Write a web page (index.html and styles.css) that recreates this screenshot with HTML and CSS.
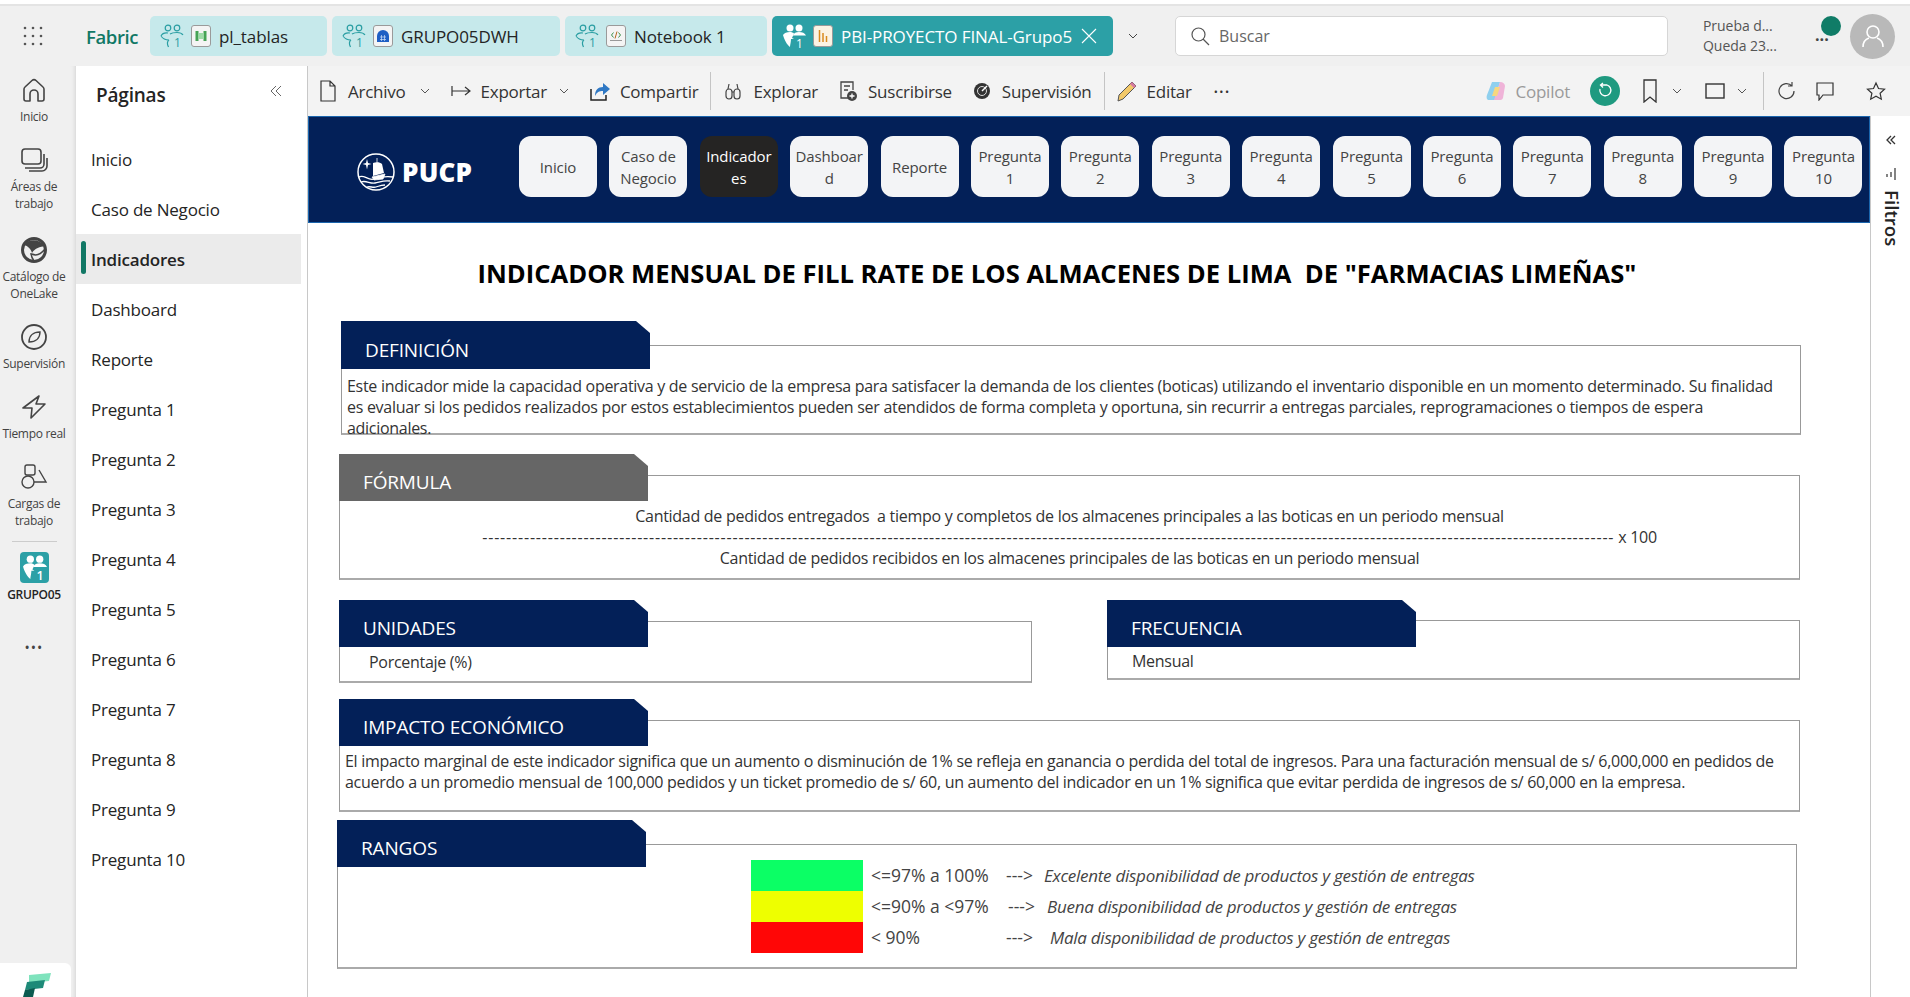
FILE: index.html
```html
<!DOCTYPE html>
<html lang="es">
<head>
	<meta charset="utf-8">
	<title>PBI-PROYECTO FINAL-Grupo5</title>
	<link rel="stylesheet" href="styles.css">
</head>

<body>
	<svg class="defs" width="0" height="0">
		<defs>
			<symbol id="group" viewBox="0 0 24 24">
				<g fill="none" stroke="currentColor" stroke-width="1.2">
					<circle cx="8" cy="4" r="2.8"/>
					<circle cx="17" cy="4" r="2.8"/>
					<path d="M10 10c1.500-1 3.500-1.500 7-1.500 3 0 5 1 6 2.500"/>
					<path d="M1 12c1-2 4-3.500 7-3M1 12c2 3 5 4 8 4M9 16c-2 1.500-2 4-.5 7"/>
				</g>
				<text x="14" y="23" font-size="12" fill="currentColor" font-family="Open Sans">1</text>
			</symbol>
			<symbol id="group-solid" viewBox="0 0 24 24">
				<circle cx="8" cy="4" r="3.500" fill="currentColor"/>
				<circle cx="17" cy="4" r="3.500" fill="currentColor"/>
				<path d="M11 11c1-2 3-3 6-3 3 0 6 1 7 3.500H11z" fill="currentColor"/>
				<path d="M1 11c1-2 4-3 7-3 1.500 0 3 .5 4 1.500L10 14l2 1H9c0 3-1 6-1 8-3-2-6-8-7-12z" fill="currentColor"/>
				<text x="14" y="24" font-size="12" fill="currentColor" font-family="Open Sans">1</text>
			</symbol>
			<symbol id="chev" viewBox="0 0 12 12">
				<path d="M2 4l4 4 4-4" fill="none" stroke="currentColor" stroke-width="1"/>
			</symbol>
		</defs>
	</svg>

	<!-- barra superior -->
	<header class="topbar">
		<svg class="waffle" width="22" height="22" viewBox="0 0 22 22" fill="#555">
			<circle cx="3" cy="3" r="1.300"/><circle cx="11" cy="3" r="1.300"/><circle cx="19" cy="3" r="1.300"/>
			<circle cx="3" cy="11" r="1.300"/><circle cx="11" cy="11" r="1.300"/><circle cx="19" cy="11" r="1.300"/>
			<circle cx="3" cy="19" r="1.300"/><circle cx="11" cy="19" r="1.300"/><circle cx="19" cy="19" r="1.300"/>
		</svg>
		<span class="brand">Fabric</span>
		<div class="tabs">
			<div class="tab tab-pl">
				<svg class="tab-group" width="24" height="24"><use href="#group"/></svg>
				<span class="item-icon"><svg width="14" height="14" viewBox="0 0 14 14"><rect x="1.500" y="2" width="3" height="10" fill="#46a356"/><rect x="9.500" y="2" width="3" height="10" fill="#46a356"/><rect x="4.500" y="4" width="5" height="6" fill="#9edba8"/></svg></span>
				pl_tablas
			</div>
			<div class="tab tab-dwh">
				<svg class="tab-group" width="24" height="24"><use href="#group"/></svg>
				<span class="item-icon"><svg width="14" height="14" viewBox="0 0 14 14"><path d="M1 13V7a6 6 0 0 1 12 0v6z" fill="#1f5fc4"/><path d="M4 8h6M4 10.500h6M5.500 6v6M8.500 6v6" stroke="#cfe0f8" stroke-width=".7"/></svg></span>
				GRUPO05DWH
			</div>
			<div class="tab tab-nb">
				<svg class="tab-group" width="24" height="24"><use href="#group"/></svg>
				<span class="item-icon"><svg width="14" height="14" viewBox="0 0 14 14"><path d="M4.500 3.500L2.500 6l2 2.500M9.500 3.500l2 2.500-2 2.500" fill="none" stroke="#3a8f4a" stroke-width="1"/><path d="M8 2.500L6 9.500" stroke="#b5651d" stroke-width="1"/><path d="M1 11.500h12" stroke="#999" stroke-width="1"/></svg></span>
				Notebook 1
			</div>
			<div class="tab tab-active">
				<svg class="tab-group" width="24" height="24"><use href="#group-solid"/></svg>
				<span class="item-icon icon-report"><svg width="14" height="14" viewBox="0 0 14 14"><path d="M3.500 1v12M7 4v9M10.500 7v6" stroke="#d98a1f" stroke-width="1.500"/></svg></span>
				PBI-PROYECTO FINAL-Grupo5
				<svg class="tab-close" width="16" height="16" viewBox="0 0 16 16"><path d="M1 1l14 14M15 1L1 15" stroke="#fff" stroke-width="1.100"/></svg>
			</div>
		</div>
		<svg class="tabs-more" width="12" height="12"><use href="#chev"/></svg>
		<div class="search">
			<svg width="20" height="20" viewBox="0 0 20 20"><circle cx="8.500" cy="8.500" r="6.500" fill="none" stroke="#555" stroke-width="1.200"/><path d="M13 13l6 6" stroke="#555" stroke-width="1.200"/></svg>
			Buscar
		</div>
		<div class="trial">
			<div>Prueba d...</div>
			<div>Queda 23...</div>
		</div>
		<div class="more-wrap">
			<span class="more-dots">...</span>
			<span class="status-dot"></span>
		</div>
		<div class="avatar">
			<svg width="24" height="24" viewBox="0 0 24 24" fill="none" stroke="#fff" stroke-width="1.600"><circle cx="12" cy="8" r="6"/><path d="M2 23c0-5 3-8 6-9M22 23c0-5-3-8-6-9"/></svg>
		</div>
	</header>

	<div class="layout">
		<!-- rail izquierdo -->
		<nav class="rail">
			<div class="rail-item">
				<svg width="28" height="28" viewBox="0 0 28 28" fill="none" stroke="#444" stroke-width="1.600"><path d="M12 4.500a3 3 0 0 1 4 0l7 6.500a3 3 0 0 1 1 2.500V23a2 2 0 0 1-2 2h-4v-7a4 4 0 0 0-8 0v7H6a2 2 0 0 1-2-2v-9.500A3 3 0 0 1 5 11z" stroke-linejoin="round"/></svg>
				<span>Inicio</span>
			</div>
			<div class="rail-item">
				<svg width="28" height="28" viewBox="0 0 28 28" fill="none" stroke="#444" stroke-width="1.600"><rect x="2" y="3" width="19" height="15" rx="3"/><path d="M24 8v10a4 4 0 0 1-4 4H5M27 12v8a5 5 0 0 1-5 5H9"/></svg>
				<span>Áreas de<br>trabajo</span>
			</div>
			<div class="rail-item rail-cat">
				<svg width="28" height="28" viewBox="0 0 28 28"><circle cx="14" cy="14" r="11.500" fill="#eee" stroke="#444" stroke-width="3"/><path d="M4 9C8 3 19 2 25 10 20 11 15 12 12 17 11 13 8 10 4 9z" fill="#444"/><path d="M11 17c0 3 1 5 3 8M12 18c4 2 9 0 13-5" fill="none" stroke="#444" stroke-width="1.500"/></svg>
				<span>Catálogo de<br>OneLake</span>
			</div>
			<div class="rail-item">
				<svg width="28" height="28" viewBox="0 0 28 28" fill="none" stroke="#444" stroke-width="1.800"><circle cx="14" cy="14" r="12"/><path d="M9 19c0-6 4-10 11-10 0 6-4 10-11 10z" stroke-width="1.400"/></svg>
				<span>Supervisión</span>
			</div>
			<div class="rail-item">
				<svg width="28" height="28" viewBox="0 0 28 28" fill="none" stroke="#444" stroke-width="1.600"><path d="M19 3L3 15h9l-1 10 14-14h-9z" stroke-linejoin="round"/></svg>
				<span>Tiempo real</span>
			</div>
			<div class="rail-item">
				<svg width="28" height="28" viewBox="0 0 28 28" fill="none" stroke="#444" stroke-width="1.400"><rect x="5" y="2" width="10" height="10" rx="2"/><circle cx="8" cy="19" r="6"/><path d="M19 7l7 12H14"/></svg>
				<span>Cargas de<br>trabajo</span>
			</div>
			<div class="rail-sep"></div>
			<div class="rail-item rail-group">
				<span class="group-tile"><svg width="25" height="25"><use href="#group-solid"/></svg></span>
				<span>GRUPO05</span>
			</div>
			<div class="rail-dots">•••</div>
			<div class="rail-logo">
				<svg width="30" height="24" viewBox="0 0 30 24"><path d="M8 2l22-2-2 8-20 2z" fill="#7fe3bd"/><path d="M6 9l18-2-2 8-18 2z" fill="#1d8a78"/><path d="M4 17l10-2-2 9H2z" fill="#0c5a50"/></svg>
			</div>
		</nav>

		<!-- panel de paginas -->
		<aside class="pages">
			<div class="pages-head">
				<h2>Páginas</h2>
				<svg width="14" height="14" viewBox="0 0 14 14" fill="none" stroke="#666" stroke-width="1"><path d="M7 2L2 7l5 5M12 2L7 7l5 5"/></svg>
			</div>
			<ul class="page-list">
				<li>Inicio</li>
				<li>Caso de Negocio</li>
				<li class="page-on">Indicadores</li>
				<li>Dashboard</li>
				<li>Reporte</li>
				<li>Pregunta 1</li>
				<li>Pregunta 2</li>
				<li>Pregunta 3</li>
				<li>Pregunta 4</li>
				<li>Pregunta 5</li>
				<li>Pregunta 6</li>
				<li>Pregunta 7</li>
				<li>Pregunta 8</li>
				<li>Pregunta 9</li>
				<li>Pregunta 10</li>
			</ul>
		</aside>

		<main class="main">
			<!-- barra de comandos -->
			<div class="cmdbar">
				<svg class="ic" width="20" height="22" viewBox="0 0 20 22" fill="none" stroke="#333" stroke-width="1.200"><path d="M3 1h9l5 5v15H3zM12 1v5h5"/></svg>
				<span class="cmd-txt">Archivo</span>
				<svg class="cmd-chev chev-first" width="12" height="12"><use href="#chev"/></svg>
				<svg class="ic m20" width="20" height="14" viewBox="0 0 20 14" fill="none" stroke="#333" stroke-width="1.200"><path d="M1 2v10M1 7h18M14 3l5 4-5 4"/></svg>
				<span class="cmd-txt">Exportar</span>
				<svg class="cmd-chev" width="12" height="12"><use href="#chev"/></svg>
				<svg class="ic m20" width="20" height="20" viewBox="0 0 20 20"><path d="M1 8v11h15v-5" fill="none" stroke="#222" stroke-width="1.500"/><path d="M5 15c0-6 3-9 8-9V2l7 6-7 6v-4c-4 0-6 1-8 5z" fill="#2f78c4"/></svg>
				<span class="cmd-txt">Compartir</span>
				<span class="cmd-sep"></span>
				<svg class="ic" width="20" height="18" viewBox="0 0 20 18" fill="none" stroke="#444" stroke-width="1.200"><rect x="3" y="7" width="6" height="10" rx="3"/><rect x="11" y="7" width="6" height="10" rx="3"/><path d="M5 7l1-5M15 7l-1-5M9 10h2"/></svg>
				<span class="cmd-txt">Explorar</span>
				<svg class="ic m20" width="20" height="22" viewBox="0 0 20 22" fill="none" stroke="#444" stroke-width="1.300"><path d="M10 18H3V2h12v8M6 6h6M6 10h4"/><circle cx="14" cy="16" r="5" fill="#444" stroke="none"/><path d="M14 13.500v5M11.500 16h5" stroke="#fff"/></svg>
				<span class="cmd-txt">Suscribirse</span>
				<svg class="ic m20" width="20" height="20" viewBox="0 0 20 20"><circle cx="10" cy="10" r="8" fill="#333"/><circle cx="10" cy="10" r="4.500" fill="none" stroke="#ddd" stroke-width="1"/><path d="M10 10l5-5" stroke="#fff" stroke-width="1.500"/></svg>
				<span class="cmd-txt">Supervisión</span>
				<span class="cmd-sep"></span>
				<svg class="ic" width="20" height="22" viewBox="0 0 20 22"><path d="M15 2l4 4L6 19l-5 2 1-6z" fill="#f3c969" stroke="#555" stroke-width="1"/><path d="M15 2l4 4-2 2-4-4z" fill="#d77ba0"/></svg>
				<span class="cmd-txt">Editar</span>
				<span class="cmd-more">•••</span>

				<div class="cmd-right">
					<svg class="ic" width="20" height="22" viewBox="0 0 20 22"><path d="M6 2h8l-5 18H3C1 20 0 18 1 15z" fill="#8fd0ee"/><path d="M14 2c3 0 5 2 5 4l-2 12c-1 2-2 2-4 2H8z" fill="#efb3d8"/><path d="M9 7h5l-3 9H6z" fill="#f7d77f"/></svg>
					<span class="cmd-txt copilot">Copilot</span>
					<span class="reset">
						<svg width="18" height="18" viewBox="0 0 18 18" fill="none" stroke="#fff" stroke-width="1.300"><path d="M5 3h6a5.500 5.500 0 1 1-7 4M7 1L4.500 3 7 5.500"/></svg>
					</span>
					<svg class="ic m20" width="20" height="24" viewBox="0 0 20 24" fill="none" stroke="#333" stroke-width="1.300"><path d="M4 1h12v22l-6-5-6 5z"/></svg>
					<svg class="cmd-chev" width="12" height="12"><use href="#chev"/></svg>
					<svg class="ic m22" width="20" height="16" viewBox="0 0 20 16" fill="none" stroke="#333" stroke-width="1.400"><rect x="1" y="1" width="18" height="14"/></svg>
					<svg class="cmd-chev" width="12" height="12"><use href="#chev"/></svg>
					<span class="cmd-sep sep-right"></span>
					<svg class="ic" width="20" height="20" viewBox="0 0 20 20" fill="none" stroke="#444" stroke-width="1.200"><path d="M16 5a7.500 7.500 0 1 0 2 5M16 1v4h-4"/></svg>
					<svg class="ic m19" width="20" height="20" viewBox="0 0 20 20" fill="none" stroke="#333" stroke-width="1.200"><path d="M2 2h16v12H8l-4 5v-5H2z"/></svg>
					<svg class="ic m31" width="20" height="20" viewBox="0 0 20 20" fill="none" stroke="#333" stroke-width="1.200"><path d="M10 2l2.500 5.500 6 .7-4.400 4 1.200 6L10 15.200 4.700 18.200l1.200-6-4.400-4 6-.7z"/></svg>
				</div>
			</div>

			<div class="report-wrap">
				<div class="report">
					<!-- banner -->
					<div class="banner">
						<div class="pucp">
							<svg width="38" height="38" viewBox="0 0 38 38">
								<circle cx="19" cy="19" r="18" fill="none" stroke="#fff" stroke-width="1.500"/>
								<path d="M16 10c3-1 7-1 9 1l2 9-11 3z" fill="#fff"/>
								<path d="M20 5v5M15 24l13-3-2 5-9 1z" fill="#fff" stroke="#fff" stroke-width=".8"/>
								<path d="M2 24c5-3 9 4 15 2s11-3 19-2M4 29c5-2 9 2 14 1s9-3 15-2M10 34c3-1 6 1 9 0s5-2 9-2" fill="none" stroke="#fff" stroke-width="1.300"/>
								<path d="M10 6l1 4 3.500 1-3.500 1-1 4.500-1-4.500L5.500 11 9 10z" fill="#fff"/>
							</svg>
							<span>PUCP</span>
						</div>
						<div class="nav-btns">
							<div class="nav-btn">Inicio</div>
							<div class="nav-btn">Caso de<br>Negocio</div>
							<div class="nav-btn nav-on">Indicador<br>es</div>
							<div class="nav-btn">Dashboar<br>d</div>
							<div class="nav-btn">Reporte</div>
							<div class="nav-btn">Pregunta<br>1</div>
							<div class="nav-btn">Pregunta<br>2</div>
							<div class="nav-btn">Pregunta<br>3</div>
							<div class="nav-btn">Pregunta<br>4</div>
							<div class="nav-btn">Pregunta<br>5</div>
							<div class="nav-btn">Pregunta<br>6</div>
							<div class="nav-btn">Pregunta<br>7</div>
							<div class="nav-btn">Pregunta<br>8</div>
							<div class="nav-btn">Pregunta<br>9</div>
							<div class="nav-btn">Pregunta<br>10</div>
						</div>
					</div>

					<h1 class="title">INDICADOR MENSUAL DE FILL RATE DE LOS ALMACENES DE LIMA  DE "FARMACIAS LIMEÑAS"</h1>

					<section class="sec sec-def">
						<div class="sec-tab">DEFINICIÓN</div>
						<div class="sec-box box-def">
							<p>Este indicador mide la capacidad operativa y de servicio de la empresa para satisfacer la demanda de los clientes (boticas) utilizando el inventario disponible en un momento determinado. Su finalidad es evaluar si los pedidos realizados por estos establecimientos pueden ser atendidos de forma completa y oportuna, sin recurrir a entregas parciales, reprogramaciones o tiempos de espera adicionales.</p>
						</div>
					</section>

					<section class="sec sec-form">
						<div class="sec-tab tab-gray">FÓRMULA</div>
						<div class="sec-box box-form">
							<p>Cantidad de pedidos entregados  a tiempo y completos de los almacenes principales a las boticas en un periodo mensual</p>
							<p><span class="dashes">----------------------------------------------------------------------------------------------------------------------------------------------------------------------------------------------</span> x 100</p>
							<p>Cantidad de pedidos recibidos en los almacenes principales de las boticas en un periodo mensual</p>
						</div>
					</section>

					<div class="sec-pair">
						<section class="sec sec-uni">
							<div class="sec-tab">UNIDADES</div>
							<div class="sec-box box-uni"><p>Porcentaje (%)</p></div>
						</section>
						<section class="sec sec-frec">
							<div class="sec-tab">FRECUENCIA</div>
							<div class="sec-box box-frec"><p>Mensual</p></div>
						</section>
					</div>

					<section class="sec sec-imp">
						<div class="sec-tab">IMPACTO ECONÓMICO</div>
						<div class="sec-box box-imp">
							<p>El impacto marginal de este indicador significa que un aumento o disminución de 1% se refleja en ganancia o perdida del total de ingresos. Para una facturación mensual de s/ 6,000,000 en pedidos de acuerdo a un promedio mensual de 100,000 pedidos y un ticket promedio de s/ 60, un aumento del indicador en un 1% significa que evitar perdida de ingresos de s/ 60,000 en la empresa.</p>
						</div>
					</section>

					<section class="sec sec-ran">
						<div class="sec-tab">RANGOS</div>
						<div class="sec-box box-ran">
							<div class="range">
								<span class="swatch sw-green"></span>
								<span class="r-label">&lt;=97% a 100%</span>
								<span class="r-arrow">---&gt;</span>
								<em class="r-desc">Excelente disponibilidad de productos y gestión de entregas</em>
							</div>
							<div class="range">
								<span class="swatch sw-yellow"></span>
								<span class="r-label">&lt;=90% a &lt;97%</span>
								<span class="r-arrow r2">---&gt;</span>
								<em class="r-desc">Buena disponibilidad de productos y gestión de entregas</em>
							</div>
							<div class="range">
								<span class="swatch sw-red"></span>
								<span class="r-label">&lt; 90%</span>
								<span class="r-arrow r3">---&gt;</span>
								<em class="r-desc">Mala disponibilidad de productos y gestión de entregas</em>
							</div>
						</div>
					</section>
				</div>

				<!-- panel de filtros -->
				<aside class="filters">
					<svg width="10" height="10" viewBox="0 0 10 10" fill="none" stroke="#333" stroke-width="1.300"><path d="M5 1L1 5l4 4M9 1L5 5l4 4"/></svg>
					<svg class="filter-ic" width="10" height="14" viewBox="0 0 10 14" stroke="#333" stroke-width="1.200"><path d="M1 7v3M5 5v5M9 1v12"/></svg>
					<span class="filter-txt">Filtros</span>
				</aside>
			</div>
		</main>
	</div>
</body>

</html>
```

FILE: styles.css
```css
* {
	box-sizing: border-box;
}

html,
body {
	margin: 0;
	height: 997px;
	overflow: hidden;
}

body {
	font-family: "Open Sans", sans-serif;
	color: #242424;
	background-color: #fff;
}

.defs {
	position: absolute;
}

/* barra superior */
.topbar {
	display: flex;
	align-items: center;
	height: 62px;
	margin-top: 4px;
	border-top: 2px solid #e4e4e4;
	background-color: #f0f0f0;
}

.waffle {
	margin-left: 22px;
	flex: none;
}

.brand {
	width: 64px;
	margin-left: 42px;
	font-size: 18.500px;
	font-weight: 600;
	letter-spacing: -0.4px;
	color: #117865;
}

.tabs {
	display: flex;
	gap: 5px;
}

.tab {
	display: flex;
	align-items: center;
	gap: 7px;
	height: 40px;
	padding-left: 10px;
	border-radius: 5px;
	background-color: #c6e9eb;
	font-size: 17px;
	letter-spacing: -0.1px;
	white-space: nowrap;
	color: #242424;
}

.tab-group {
	flex: none;
	color: #2a9ea3;
}

.tab-pl {
	width: 177px;
}

.tab-dwh {
	width: 228px;
}

.tab-nb {
	width: 202px;
}

.tab-active {
	width: 341px;
	background-color: #2ca0a6;
	color: #fff;
}

.tab-active .tab-group {
	color: #fff;
}

.item-icon {
	display: flex;
	align-items: center;
	justify-content: center;
	width: 20px;
	height: 22px;
	margin-right: 1px;
	border: 1px solid #9a9a9a;
	border-radius: 3px;
	background-color: #f4f4f4;
	flex: none;
}

.icon-report {
	background-color: #fbf3e4;
}

.tab-close {
	margin-left: 2px;
}

.tabs-more {
	margin-left: 14px;
	color: #444;
	flex: none;
}

.search {
	display: flex;
	align-items: center;
	gap: 9px;
	width: 493px;
	height: 40px;
	margin-left: 36px;
	padding-left: 14px;
	border: 1px solid #d6d6d6;
	border-radius: 5px;
	background-color: #fff;
	font-size: 16px;
	color: #666;
}

.trial {
	width: 92px;
	margin-left: 35px;
	font-size: 14px;
	line-height: 20px;
	letter-spacing: -0.05px;
	color: #555;
}

.more-wrap {
	position: relative;
	width: 30px;
	margin-left: 20px;
	height: 40px;
}

.more-dots {
	position: absolute;
	left: 0;
	top: 8px;
	font-size: 16px;
	font-weight: 700;
	color: #444;
}

.status-dot {
	position: absolute;
	left: 6px;
	top: 0;
	width: 20px;
	height: 20px;
	border-radius: 50%;
	background-color: #107c67;
}

.avatar {
	display: flex;
	align-items: center;
	justify-content: center;
	width: 45px;
	height: 45px;
	margin-left: 5px;
	border-radius: 50%;
	background-color: #b9b9b9;
}

/* cuerpo */
.layout {
	display: flex;
	height: 931px;
}

/* rail */
.rail {
	position: relative;
	display: flex;
	flex-direction: column;
	align-items: center;
	gap: 21px;
	width: 76px;
	padding: 10px 8px 0 0;
	background-color: #f0f0f0;
	box-shadow: inset -5px 0 5px -5px #c8c8c8;
	flex: none;
}

.rail-item {
	display: flex;
	flex-direction: column;
	align-items: center;
	gap: 4px;
	width: 68px;
	font-size: 12px;
	line-height: 17px;
	letter-spacing: -0.3px;
	text-align: center;
	color: #424242;
}

.rail-item svg {
	display: block;
}

.rail-cat {
	margin-top: 3px;
}

.rail-sep {
	width: 45px;
	height: 1px;
	margin-top: -9px;
	background-color: #ccc;
}

.rail-group {
	gap: 3px;
	margin-top: -11px;
	font-weight: 600;
	color: #242424;
}

.group-tile {
	display: flex;
	align-items: center;
	justify-content: center;
	width: 29px;
	height: 31px;
	border-radius: 4px;
	background-color: #2ca0a6;
	color: #fff;
}

.rail-dots {
	margin-top: 14px;
	font-size: 14px;
	letter-spacing: 1px;
	color: #444;
}

.rail-logo {
	position: absolute;
	left: 0;
	bottom: 0;
	display: flex;
	justify-content: center;
	align-items: flex-end;
	width: 71px;
	height: 34px;
	padding-top: 11px;
	border-radius: 0 6px 0 0;
	background-color: #fff;
	overflow: hidden;
}

/* paginas */
.pages {
	width: 232px;
	border-right: 1px solid #c8c8c8;
	background-color: #fff;
	flex: none;
}

.pages-head {
	display: flex;
	justify-content: space-between;
	height: 69px;
	padding: 16px 24px 0 20px;
}

.pages-head svg {
	margin-top: 2px;
}

.pages-head h2 {
	margin: 0;
	font-size: 19px;
	font-weight: 600;
	letter-spacing: -0.2px;
}

.page-list {
	margin: -1px 0 0;
	padding: 0;
	list-style: none;
}

.page-list li {
	position: relative;
	display: flex;
	align-items: center;
	width: 225px;
	height: 50px;
	padding-left: 15px;
	font-size: 17px;
	letter-spacing: -0.2px;
}

.page-on {
	background-color: #ebebeb;
	font-weight: 600;
}

.page-on::before {
	content: "";
	position: absolute;
	left: 5px;
	top: 7px;
	width: 5px;
	height: 33px;
	border-radius: 3px;
	background-color: #117865;
}

/* comandos */
.main {
	display: flex;
	flex-direction: column;
	flex: 1;
	min-width: 0;
	background-color: #fff;
}

.cmdbar {
	display: flex;
	align-items: center;
	height: 50px;
	padding-left: 10px;
	background-color: #f3f3f3;
	flex: none;
}

.ic {
	flex: none;
}

.m20 {
	margin-left: 20px;
}

.m22 {
	margin-left: 22px;
}

.m19 {
	margin-left: 19px;
}

.m31 {
	margin-left: 31px;
}

.cmd-txt {
	margin-left: 10px;
	font-size: 17px;
	letter-spacing: -0.25px;
	white-space: nowrap;
	color: #333;
}

.cmd-chev {
	margin-left: 11px;
	color: #555;
	flex: none;
}

.chev-first {
	margin-left: 13px;
}

.cmd-sep {
	width: 1px;
	height: 38px;
	margin: 0 12px;
	background-color: #c4c4c4;
	flex: none;
}

.cmd-more {
	margin-left: 22px;
	font-size: 11px;
	letter-spacing: 1.500px;
	color: #333;
}

.cmd-right {
	display: flex;
	align-items: center;
	margin-left: auto;
	padding-right: 24px;
}

.copilot {
	color: #9a9a9a;
}

.reset {
	display: flex;
	align-items: center;
	justify-content: center;
	width: 30px;
	height: 30px;
	margin-left: 20px;
	border-radius: 50%;
	background-color: #1f9a80;
}

.sep-right {
	margin: 0 12px 0 15px;
}

/* reporte */
.report-wrap {
	display: flex;
	flex: 1;
	min-height: 0;
}

.report {
	flex: 1;
	min-width: 0;
}

.banner {
	display: flex;
	align-items: flex-start;
	height: 107px;
	padding-top: 19px;
	border: 1px solid #1a65ad;
	background-color: #032058;
}

.pucp {
	display: flex;
	align-items: center;
	gap: 7px;
	width: 210px;
	margin-top: 17px;
	padding-left: 48px;
}

.pucp span {
	font-size: 26px;
	font-weight: 800;
	letter-spacing: 0.2px;
	color: #fff;
}

.nav-btns {
	display: flex;
	gap: 12.400px;
}

.nav-btn {
	display: flex;
	align-items: center;
	justify-content: center;
	width: 78px;
	height: 61px;
	border-radius: 12px;
	background-color: #f3f4f6;
	font-size: 15px;
	line-height: 22px;
	letter-spacing: -0.1px;
	text-align: center;
	color: #444;
}

.nav-on {
	background-color: #252423;
	color: #fff;
}

.title {
	margin: 35px 64px 0 0;
	font-size: 25.600px;
	line-height: 32px;
	font-weight: 700;
	text-align: center;
	white-space: pre;
	color: #000;
}

.sec p {
	margin: 0;
}

.sec {
	position: relative;
	font-size: 16px;
	line-height: 21px;
	letter-spacing: -0.29px;
	color: #333;
}

.sec-tab {
	position: relative;
	z-index: 1;
	display: flex;
	align-items: flex-end;
	width: 309px;
	height: 47px;
	padding: 0 0 7px 24px;
	background-color: #032058;
	clip-path: polygon(0 0, 295px 0, 100% 12px, 100% 100%, 0 100%);
	font-size: 19px;
	line-height: 24px;
	letter-spacing: -0.15px;
	white-space: nowrap;
	color: #fff;
}

.tab-gray {
	background-color: #666;
}

.sec-box {
	margin-top: -26px;
	border: 1px solid #999;
	border-bottom: 2px solid #aaa;
	background-color: #fff;
}

.sec-def {
	margin: 31px 0 0 33px;
	width: 1460px;
}

.sec-def .sec-tab {
	height: 48px;
}

.box-def {
	height: 90px;
	margin-top: -24px;
	padding: 30px 20px 0 5px;
}

.sec-form {
	margin: 19px 0 0 31px;
	width: 1461px;
}

.box-form {
	height: 105px;
	padding-top: 30px;
	text-align: center;
	letter-spacing: -0.28px;
}

.box-form p {
	white-space: pre;
}

.dashes {
	letter-spacing: 0.810px;
}

.sec-pair {
	display: flex;
	gap: 75px;
	margin: 20px 0 0 31px;
}

.sec-uni {
	width: 693px;
}

.box-uni {
	height: 62px;
	padding: 30px 0 0 29px;
}

.sec-frec {
	width: 693px;
}

.box-frec {
	height: 60px;
	margin-top: -27px;
	padding: 30px 0 0 24px;
}

.sec-imp {
	margin: 16px 0 0 31px;
	width: 1461px;
}

.box-imp {
	height: 92px;
	padding: 30px 10px 0 5px;
}

.sec-ran {
	margin: 8px 0 0 29px;
	width: 1460px;
}

.box-ran {
	height: 125px;
	margin-top: -23px;
	padding: 15px 0 0 413px;
	color: #444;
}

.range {
	display: flex;
	align-items: center;
	height: 31px;
	font-size: 17.500px;
	letter-spacing: 0;
	white-space: nowrap;
}

.swatch {
	width: 112px;
	height: 31px;
	margin-right: 8px;
	flex: none;
}

.sw-green {
	background-color: #0bff65;
}

.sw-yellow {
	background-color: #eeff00;
}

.sw-red {
	background-color: #ff0606;
}

.r-label {
	width: 135px;
	flex: none;
}

.r-arrow {
	width: 38px;
	flex: none;
}

.r2 {
	width: 39px;
	margin-left: 2px;
}

.r3 {
	width: 44px;
}

.r-desc {
	font-size: 17px;
	letter-spacing: -0.27px;
}

/* filtros */
.filters {
	display: flex;
	flex-direction: column;
	align-items: center;
	width: 40px;
	padding-top: 19px;
	border-left: 1px solid #c8c8c8;
	background-color: #fff;
	flex: none;
}

.filter-ic {
	margin-top: 22px;
}

.filter-txt {
	margin: 9px 0 0 3px;
	writing-mode: vertical-rl;
	font-size: 18.700px;
	font-weight: 600;
}
```
